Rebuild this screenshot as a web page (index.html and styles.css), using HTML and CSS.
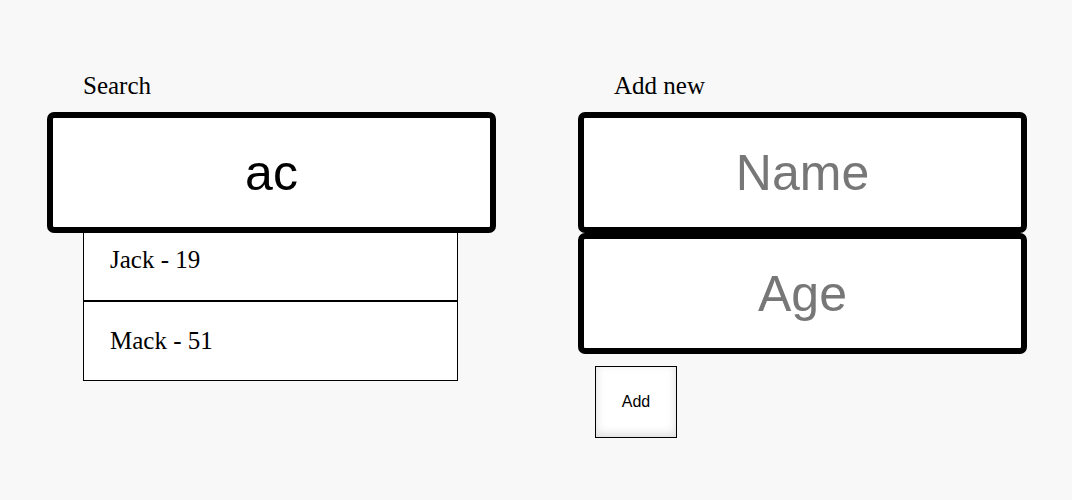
FILE: index.html
```html
<!DOCTYPE html>
<html>
<head>
<meta charset="utf-8">
<link rel="stylesheet" href="styles.css">
</head>
<body>
<main class="page">
  <section class="column">
    <label class="label">Search</label>
    <input class="field field-search" type="text" value="ac">
    <ul class="results">
      <li class="result">Jack - 19</li>
      <li class="result">Mack - 51</li>
    </ul>
  </section>
  <section class="column">
    <label class="label">Add new</label>
    <input class="field" type="text" placeholder="Name">
    <input class="field field-second" type="text" placeholder="Age">
    <button class="add-btn" type="button">Add</button>
  </section>
</main>
</body>
</html>
```
FILE: styles.css
```css
html, body {
  margin: 0;
  padding: 0;
  background: #f8f8f8;
}
.page {
  display: flex;
  gap: 156px;
  padding: 72px 0 0 83px;
  font-family: "Liberation Serif", "Times New Roman", serif;
}
.column {
  width: 375px;
  display: flex;
  flex-direction: column;
  align-items: flex-start;
}
.label {
  display: block;
  font-size: 25px;
  line-height: 28px;
  height: 28px;
  margin-bottom: 12px;
  color: #000;
}
.field {
  position: relative;
  z-index: 1;
  box-sizing: border-box;
  width: 449px;
  height: 121px;
  margin: 0 0 0 -36px;
  border: 6px solid #000;
  border-radius: 7px;
  background: #fff;
  font-family: "Liberation Sans", Arial, sans-serif;
  font-size: 50px;
  color: #000;
  text-align: center;
  outline: none;
  padding: 0;
}
.field::placeholder {
  color: #777;
  opacity: 1;
}
.field-second {
  margin-top: 0;
  height: 121px;
}
.results {
  list-style: none;
  margin: -12px 0 0 0;
  padding: 0;
  width: 375px;
  box-sizing: border-box;
  border: 1px solid #000;
  background: #fff;
}
.result {
  font-size: 25px;
  line-height: 29px;
  padding: 23px 26px 26px;
  color: #000;
}
.result + .result {
  border-top: 2px solid #000;
  padding-top: 24px;
  padding-bottom: 25px;
}
.add-btn {
  margin: 12px 0 0 -19px;
  width: 82px;
  height: 72px;
  box-sizing: border-box;
  border: 1px solid #000;
  border-radius: 0;
  background: #fff;
  box-shadow: inset 0 -3px 10px rgba(0, 0, 0, 0.14);
  font-family: "Liberation Sans", Arial, sans-serif;
  font-size: 16px;
  color: #000;
  padding: 0;
}
```
